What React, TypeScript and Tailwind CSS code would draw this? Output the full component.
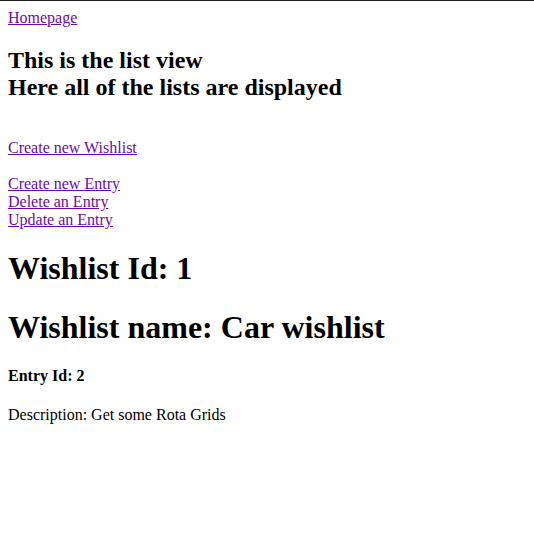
export default function App() {
  const link = "text-[#6e0aa8] underline";
  return (
    <div className="min-h-[535px] border-t border-[#1c1c1c] bg-white p-2 font-['Liberation_Serif',serif] text-base leading-[normal] text-black">
      <a href="#" className={link}>Homepage</a>
      <h2 className="my-[19.92px] text-2xl font-bold leading-[normal]">
        This is the list view
        <br />
        Here all of the lists are displayed
      </h2>
      <br />
      <a href="#" className={link}>Create new Wishlist</a>
      <br />
      <br />
      <a href="#" className={link}>Create new Entry</a>
      <br />
      <a href="#" className={link}>Delete an Entry</a>
      <br />
      <a href="#" className={link}>Update an Entry</a>
      <div>
        <h1 className="my-[21.44px] text-[32px] font-bold leading-[normal]">Wishlist Id: 1</h1>
        <h1 className="my-[21.44px] text-[32px] font-bold leading-[normal]">Wishlist name: Car wishlist</h1>
        <h4 className="my-[21.28px] font-bold leading-[normal]">Entry Id: 2</h4>
        <p className="my-4">Description: Get some Rota Grids</p>
      </div>
    </div>
  );
}
